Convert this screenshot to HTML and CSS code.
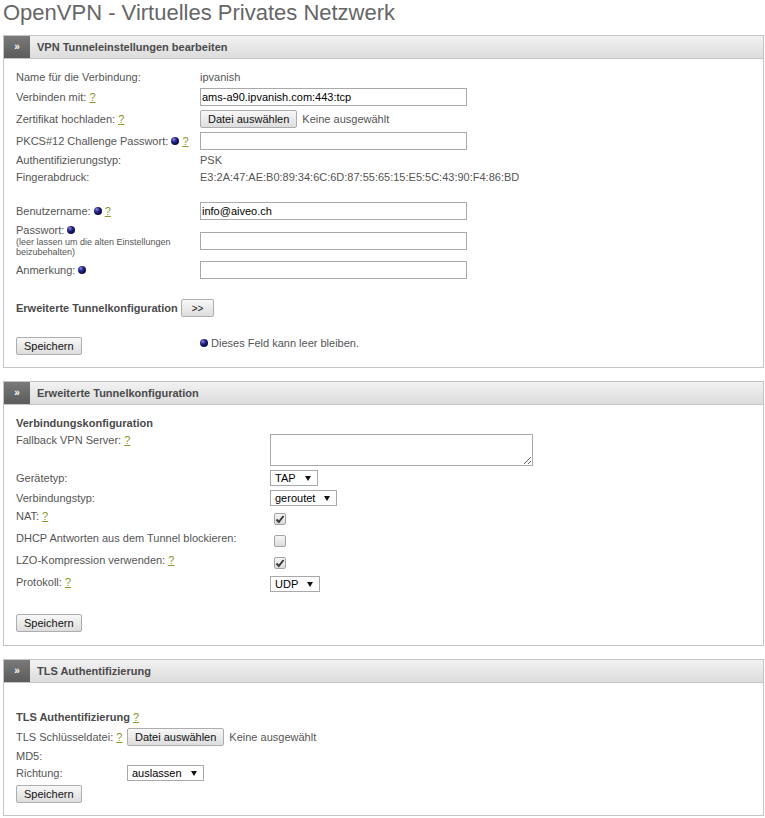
FILE: index.html
```html
<!DOCTYPE html>
<html lang="de">
<head>
<meta charset="UTF-8" />
<title>OpenVPN - Virtuelles Privates Netzwerk</title>
<link rel="stylesheet" href="styles.css">
</head>
<body>

<h1 class="page-title">OpenVPN - Virtuelles Privates Netzwerk</h1>

<div class="panel">
  <div class="panel-head"><span class="arrow">&raquo;</span><span class="panel-title">VPN Tunneleinstellungen bearbeiten</span></div>
  <div class="panel-body">
    <div class="row"><div class="lbl">Name für die Verbindung:</div><div>ipvanish</div></div>
    <div class="row"><div class="lbl">Verbinden mit: <a class="help">?</a></div><input class="text" type="text" value="ams-a90.ipvanish.com:443:tcp"></div>
    <div class="row"><div class="lbl">Zertifikat hochladen: <a class="help">?</a></div><button class="btn">Datei auswählen</button><span class="file-name">Keine ausgewählt</span></div>
    <div class="row"><div class="lbl">PKCS#12 Challenge Passwort: <span class="dot"></span> <a class="help">?</a></div><input class="text" type="text" value=""></div>
    <div class="row"><div class="lbl">Authentifizierungstyp:</div><div>PSK</div></div>
    <div class="row"><div class="lbl">Fingerabdruck:</div><div>E3:2A:47:AE:B0:89:34:6C:6D:87:55:65:15:E5:5C:43:90:F4:86:BD</div></div>

    <div class="row gap"><div class="lbl">Benutzername: <span class="dot"></span> <a class="help">?</a></div><input class="text" type="text" value="info@aiveo.ch"></div>
    <div class="row">
      <div class="lbl">Passwort: <span class="dot"></span>
        <div class="hint">(leer lassen um die alten Einstellungen beizubehalten)</div>
      </div>
      <input class="text" type="password" value="">
    </div>
    <div class="row"><div class="lbl">Anmerkung: <span class="dot"></span></div><input class="text" type="text" value=""></div>

    <div class="row gap-lg"><b class="strong">Erweiterte Tunnelkonfiguration</b><button class="btn btn-more">&gt;&gt;</button></div>

    <div class="row gap-lg">
      <div class="lbl"><button class="btn">Speichern</button></div>
      <div class="note"><span class="dot"></span> Dieses Feld kann leer bleiben.</div>
    </div>
  </div>
</div>

<div class="panel adv">
  <div class="panel-head"><span class="arrow">&raquo;</span><span class="panel-title">Erweiterte Tunnelkonfiguration</span></div>
  <div class="panel-body">
    <div class="row"><b class="strong">Verbindungskonfiguration</b></div>
    <div class="row top"><div class="lbl">Fallback VPN Server: <a class="help">?</a></div><textarea class="area"></textarea></div>
    <div class="row"><div class="lbl">Gerätetyp:</div><span class="select">TAP<svg class="caret" width="6" height="5" viewBox="0 0 6 5"><path d="M0 0h6L3 5z"/></svg></span></div>
    <div class="row"><div class="lbl">Verbindungstyp:</div><span class="select">geroutet<svg class="caret" width="6" height="5" viewBox="0 0 6 5"><path d="M0 0h6L3 5z"/></svg></span></div>
    <div class="row top"><div class="lbl">NAT: <a class="help">?</a></div><span class="check on"><svg width="10" height="10" viewBox="0 0 10 10"><path d="M1.5 5.5l2.3 2.5L8.5 2"/></svg></span></div>
    <div class="row top"><div class="lbl">DHCP Antworten aus dem Tunnel blockieren:</div><span class="check"></span></div>
    <div class="row top"><div class="lbl">LZO-Kompression verwenden: <a class="help">?</a></div><span class="check on"><svg width="10" height="10" viewBox="0 0 10 10"><path d="M1.5 5.5l2.3 2.5L8.5 2"/></svg></span></div>
    <div class="row top"><div class="lbl">Protokoll: <a class="help">?</a></div><span class="select">UDP<svg class="caret" width="6" height="5" viewBox="0 0 6 5"><path d="M0 0h6L3 5z"/></svg></span></div>

    <div class="row gap-xl"><button class="btn">Speichern</button></div>
  </div>
</div>

<div class="panel tls">
  <div class="panel-head"><span class="arrow">&raquo;</span><span class="panel-title">TLS Authentifizierung</span></div>
  <div class="panel-body">
    <div class="row gap-lg"><b class="strong">TLS Authentifizierung</b>&nbsp;<a class="help">?</a></div>
    <div class="row"><div class="lbl">TLS Schlüsseldatei: <a class="help">?</a></div><button class="btn">Datei auswählen</button><span class="file-name">Keine ausgewählt</span></div>
    <div class="row"><div class="lbl">MD5:</div></div>
    <div class="row tight"><div class="lbl">Richtung:</div><span class="select">auslassen<svg class="caret" width="6" height="5" viewBox="0 0 6 5"><path d="M0 0h6L3 5z"/></svg></span></div>
    <div class="row"><button class="btn">Speichern</button></div>
  </div>
</div>

</body>
</html>
```

FILE: styles.css
```css
body {
  margin: 0;
  padding: 0 1px 0 3px;
  font-family: "Liberation Sans", Arial, sans-serif;
  font-size: 11px;
  color: #555;
  background: #fff;
}
.page-title {
  margin: 0 0 10px 0;
  font-size: 22px;
  line-height: 25px;
  font-weight: normal;
  color: #666;
}
.panel {
  border: 1px solid #c4c4c4;
  margin-bottom: 13px;
}
.panel-head {
  display: flex;
  height: 22px;
  background: linear-gradient(#f2f2f2, #dcdcdc);
  border-bottom: 1px solid #c4c4c4;
}
.arrow {
  width: 26px;
  background: linear-gradient(#7a7a7a, #5b5b5b);
  color: #fff;
  font-size: 10px;
  font-weight: bold;
  line-height: 21px;
  text-align: center;
}
.panel-title {
  padding-left: 7px;
  font-weight: bold;
  line-height: 22px;
  color: #4a4a4a;
}
.panel-body {
  padding: 10px 12px 10px 12px;
}
.adv .panel-body {
  padding-bottom: 11px;
}
.row {
  display: flex;
  align-items: center;
  padding: 2px 0;
  line-height: 13px;
}
.row.top {
  align-items: flex-start;
}
.row.gap {
  margin-top: 14px;
}
.row.gap-lg {
  margin-top: 16px;
}
.row.gap-xl {
  margin-top: 18px;
}
.row.tight {
  padding: 0 0 2px 0;
}
.lbl {
  flex: 0 0 184px;
}
.adv .lbl {
  flex-basis: 254px;
}
.tls .lbl {
  flex-basis: 111px;
}
.strong {
  font-weight: bold;
  color: #4a4a4a;
}
.help {
  color: #7f9a26;
  text-decoration: underline;
  cursor: pointer;
}
.dot {
  display: inline-block;
  width: 8px;
  height: 8px;
  border-radius: 50%;
  vertical-align: 0;
  background: radial-gradient(circle at 35% 30%, #8b8bd0 0, #23238a 35%, #0a0a4a 70%, #000028 100%);
}
.hint {
  font-size: 9px;
  line-height: 10px;
  max-width: 172px;
}
.text {
  width: 267px;
  height: 18px;
  box-sizing: border-box;
  margin: 0;
  padding: 0 1px;
  border: 1px solid #a9a9a9;
  font-family: inherit;
  font-size: 11px;
  color: #000;
  outline: none;
}
.area {
  width: 263px;
  height: 32px;
  box-sizing: border-box;
  margin: 0;
  border: 1px solid #a9a9a9;
  font-family: inherit;
  font-size: 11px;
}
.btn {
  height: 18px;
  margin: 0;
  padding: 0 7px;
  border: 1px solid #adadad;
  border-radius: 2px;
  background: linear-gradient(#f8f8f8, #dddddd);
  font-family: inherit;
  font-size: 11px;
  color: #111;
}
.btn-more {
  margin-left: 3px;
  padding: 0 10px;
  font-size: 10px;
}
.file-name {
  margin-left: 5px;
}
.note {
  align-self: flex-start;
}
.select {
  display: inline-flex;
  align-items: center;
  gap: 9px;
  height: 16px;
  box-sizing: border-box;
  padding: 0 6px 0 4px;
  border: 1px solid #a9a9a9;
  background: #fff;
  color: #000;
}
.caret {
  fill: #111;
}
.check {
  display: inline-block;
  width: 12px;
  height: 12px;
  box-sizing: border-box;
  margin: 3px 3px 3px 4px;
  border: 1px solid #a3a3a3;
  border-radius: 2px;
  background: linear-gradient(#f6f6f6, #dcdcdc);
}
.check svg {
  display: block;
  fill: none;
  stroke: #3a3a3a;
  stroke-width: 2;
}
```
